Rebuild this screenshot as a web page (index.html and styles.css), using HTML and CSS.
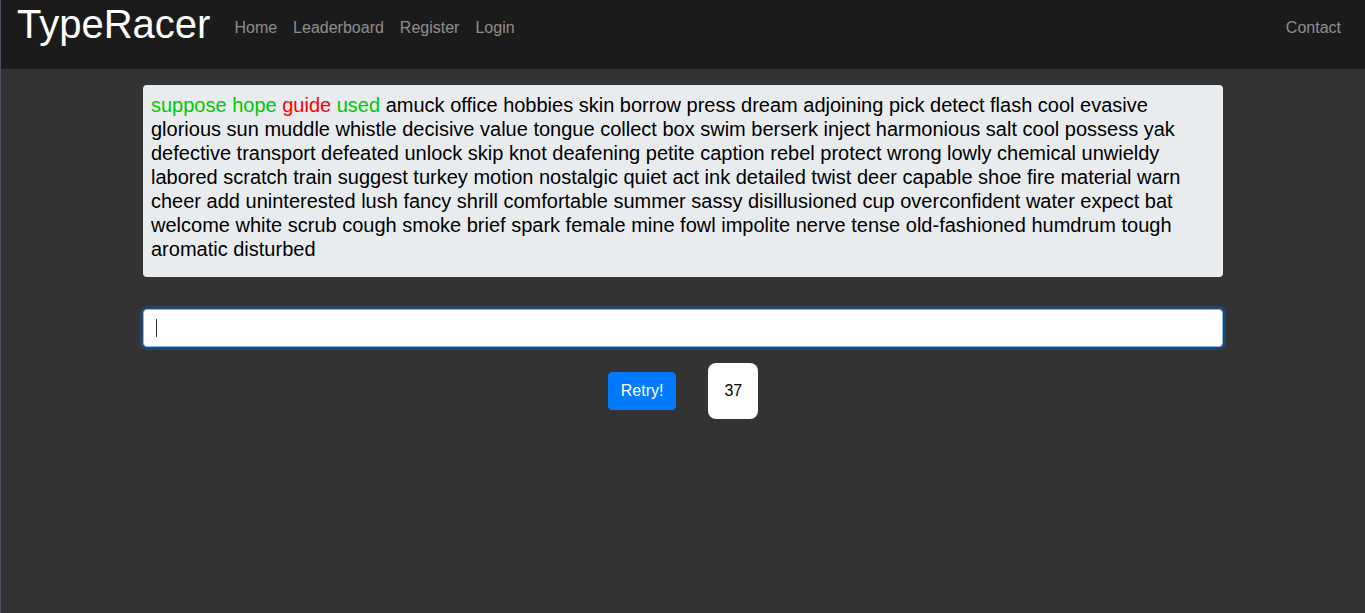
FILE: index.html
```html
<!DOCTYPE html>
<html lang="en">
<head>
<meta charset="utf-8">
<title>TypeRacer</title>
<link rel="stylesheet" href="styles.css">
</head>
<body>
<nav class="navbar">
  <a class="brand" href="#">TypeRacer</a>
  <ul class="nav">
    <li><a class="nav-link" href="#">Home</a></li>
    <li><a class="nav-link" href="#">Leaderboard</a></li>
    <li><a class="nav-link" href="#">Register</a></li>
    <li><a class="nav-link" href="#">Login</a></li>
  </ul>
  <ul class="nav nav-right">
    <li><a class="nav-link" href="#">Contact</a></li>
  </ul>
</nav>
<main class="container">
  <div class="prompt">
    <p class="prompt-text"><span class="ok">suppose hope</span> <span class="bad">guide</span> <span class="ok">used</span> amuck office hobbies skin borrow press dream adjoining pick detect flash cool evasive glorious sun muddle whistle decisive value tongue collect box swim berserk inject harmonious salt cool possess yak defective transport defeated unlock skip knot deafening petite caption rebel protect wrong lowly chemical unwieldy labored scratch train suggest turkey motion nostalgic quiet act ink detailed twist deer capable shoe fire material warn cheer add uninterested lush fancy shrill comfortable summer sassy disillusioned cup overconfident water expect bat welcome white scrub cough smoke brief spark female mine fowl impolite nerve tense old-fashioned humdrum tough aromatic disturbed</p>
  </div>
  <div class="input-wrap">
    <input class="type-input" type="text" aria-label="Type here">
    <span class="caret"></span>
  </div>
  <div class="actions">
    <button class="btn-retry" type="button">Retry!</button>
    <div class="timer">37</div>
  </div>
</main>
</body>
</html>
```
FILE: styles.css
```css
* { box-sizing: border-box; }
html, body { margin: 0; padding: 0; height: 100%; }
body {
  background: #333333;
  border-left: 1px solid #46505e;
  font-family: "Liberation Sans", Arial, sans-serif;
  font-size: 16px;
  line-height: 1.5;
  color: #212529;
}
.navbar {
  display: flex;
  align-items: flex-start;
  height: 69px;
  padding: 0 16px;
  background: #1b1b1b;
}
.brand {
  font-size: 40px;
  line-height: 48px;
  color: #fff;
  text-decoration: none;
  margin-right: 16px;
}
.nav {
  display: flex;
  list-style: none;
  margin: 0;
  padding: 8px 0 0;
}
.nav-right { margin-left: auto; }
.nav-link {
  display: block;
  padding: 8px 8px;
  line-height: 24px;
  color: rgba(255, 255, 255, 0.5);
  text-decoration: none;
}
.container {
  max-width: 1080px;
  margin: 0 auto;
  padding-top: 16px;
}
.prompt {
  background: #e9ecef;
  border-radius: 4px;
  padding: 8px 8px 16px;
}
.prompt-text {
  margin: 0;
  font-size: 20px;
  line-height: 24px;
  color: #000;
}
.ok { color: #00c800; }
.bad { color: #ff0000; }
.input-wrap {
  position: relative;
  margin-top: 32px;
}
.type-input {
  display: block;
  width: 100%;
  height: 38px;
  padding: 6px 12px;
  font: inherit;
  border: 1px solid #80bdff;
  border-radius: 4px;
  background: #fff;
  outline: none;
  box-shadow: 0 0 0 3px rgba(0, 123, 255, 0.25);
  caret-color: transparent;
}
.caret {
  position: absolute;
  left: 13px;
  top: 10px;
  width: 1px;
  height: 18px;
  background: #333;
}
.actions {
  display: flex;
  justify-content: center;
  align-items: center;
  gap: 32px;
  margin-top: 16px;
}
.btn-retry {
  font: inherit;
  line-height: 24px;
  padding: 6px 12px;
  border: 1px solid #007bff;
  border-radius: 4px;
  background: #007bff;
  color: #fff;
}
.timer {
  background: #fff;
  border-radius: 8px;
  padding: 16px;
  line-height: 24px;
  color: #000;
}
```
